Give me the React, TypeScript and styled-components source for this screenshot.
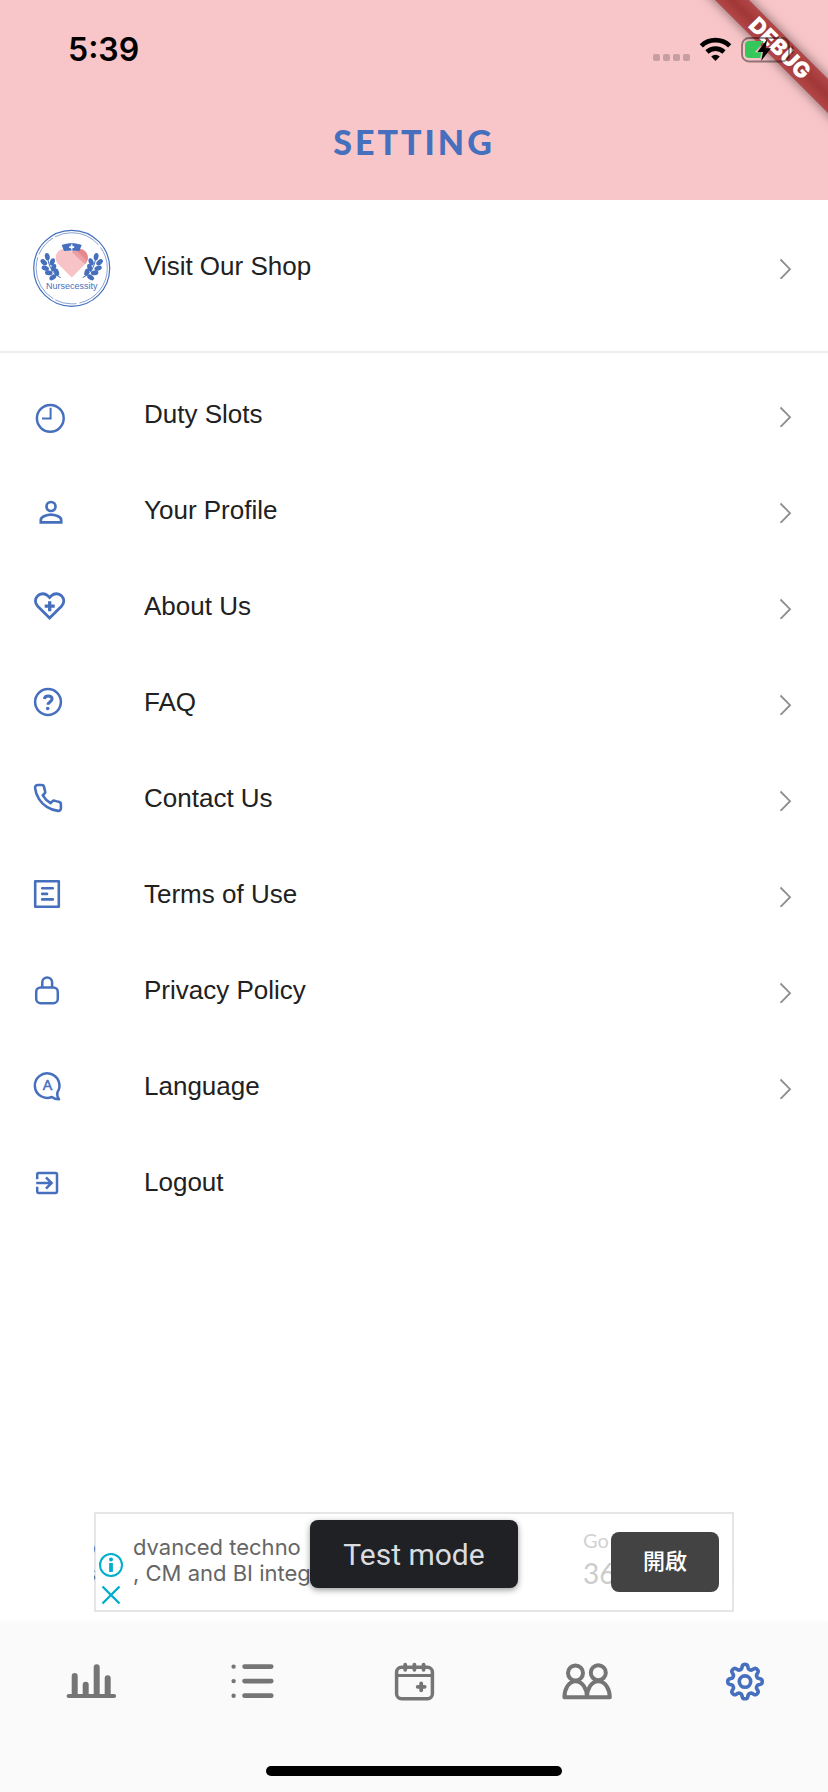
import React from "react";
import styled, { createGlobalStyle } from "styled-components";

const BLUE = "#466fbd";
const PINK = "#f8c6c9";
const GREY = "#757575";

const GlobalStyle = createGlobalStyle`
  *, *::before, *::after { box-sizing: border-box; }
  body {
    margin: 0;
    background: #ffffff;
    font-family: "Liberation Sans", Arial, sans-serif;
  }
`;

const Page = styled.div`
  position: relative;
  display: flex;
  flex-direction: column;
  min-height: 100vh;
  overflow: hidden;
`;

const Header = styled.header`
  background: ${PINK};
  padding-bottom: 36px;
`;

const StatusBar = styled.div`
  display: flex;
  justify-content: space-between;
  align-items: center;
  height: 100px;
  padding: 0 28px 0 68px;
`;

const Clock = styled.time`
  font: 600 32px/40px Inter, sans-serif;
  color: #000;
`;

const StatusIcons = styled.svg`
  position: relative;
  z-index: 2;
  display: block;
  width: 150px;
  height: 32px;
`;

const Title = styled.h1`
  margin: 0;
  padding-top: 20px;
  text-align: center;
  font: 900 34px/44px Lato, sans-serif;
  letter-spacing: 3px;
  color: ${BLUE};
`;

const RibbonCorner = styled.div`
  position: absolute;
  top: 0;
  right: 0;
  z-index: 1;
  width: 160px;
  height: 160px;
  overflow: hidden;
  pointer-events: none;
`;

const Ribbon = styled.div`
  position: absolute;
  top: 36px;
  left: 12px;
  width: 200px;
  height: 24px;
  transform: rotate(45deg);
  background: linear-gradient(#b24648, #a23737 50%, #b24648);
  box-shadow: 0 0 12px rgba(0, 0, 0, 0.5);
  color: #fff;
  text-align: center;
  font: 900 22px/24px Inter, sans-serif;
`;

const ShopSection = styled.section`
  padding-bottom: 19px;
  border-bottom: 2px solid #eeeeee;
`;

const List = styled.ul`
  flex: 1;
  margin: 0;
  padding: 13px 0 0;
  list-style: none;
`;

const Row = styled.a<{ $tall?: boolean }>`
  display: grid;
  grid-template-columns: 112px 1fr 14px;
  align-items: center;
  height: ${(p) => (p.$tall ? 132 : 96)}px;
  padding: 0 36px 0 32px;
  color: #212121;
  font-size: 26px;
  line-height: 32px;
  text-decoration: none;
`;

const RowIcon = styled.svg`
  display: block;
  width: 36px;
  height: 36px;
  overflow: visible;
  fill: none;
  stroke: ${BLUE};
  stroke-width: 2.5;
`;

const LogoSvg = styled.svg`
  display: block;
  width: 80px;
  height: 84px;
`;

const ChevronSvg = styled.svg`
  display: block;
  width: 14px;
  height: 26px;
  fill: none;
  stroke: #8e8e8e;
  stroke-width: 1.8;
`;

const Ad = styled.aside`
  position: relative;
  display: flex;
  align-items: center;
  width: 100%;
  max-width: 640px;
  height: 100px;
  margin: 0 auto 10px;
  background: #fff;
  box-shadow: inset 0 0 0 2px #e4e5e7;
  font-family: Inter, sans-serif;
`;

const Sliver = styled.div<{ $end?: boolean }>`
  display: flex;
  flex-direction: column;
  align-items: ${(p) => (p.$end ? "flex-start" : "flex-end")};
  flex: none;
  width: 2px;
  padding-bottom: 4px;
  overflow: hidden;
  color: ${(p) => (p.$end ? "#cccccc" : "#666666")};
  font-size: 22px;
  line-height: 26px;
`;

const AdChoices = styled.div`
  display: flex;
  flex-direction: column;
  align-items: center;
  align-self: flex-end;
  gap: 4px;
  flex: none;
  width: 30px;
  margin-right: 7px;
  padding-bottom: 4px;
`;

const AdControl = styled.button`
  display: block;
  width: 26px;
  height: 26px;
  padding: 0;
  border: 0;
  background: none;
  fill: none;
  stroke: #00aecd;
  stroke-width: 2;

  svg { display: block; }
`;

const AdCopy = styled.p`
  flex: 1;
  margin: 0;
  padding-bottom: 4px;
  overflow: hidden;
  white-space: nowrap;
  color: #666666;
  font-size: 22px;
  line-height: 26px;
`;

const AdBrand = styled.div`
  flex: none;
  width: 28px;
  padding-bottom: 4px;
  overflow: hidden;
  color: #d2d2d2;
  font: 400 20px/26px Lato, sans-serif;

  strong {
    display: block;
    font-size: 28px;
    font-weight: 400;
    line-height: 40px;
    color: #cccccc;
  }
`;

const OpenButton = styled.button`
  flex: none;
  width: 108px;
  height: 60px;
  margin-right: 13px;
  padding: 0 0 6px;
  border: 0;
  border-radius: 8px;
  background: #434343;
  color: #fff;
  font: 500 22px/32px "Noto Sans CJK TC", sans-serif;
`;

const TestMode = styled.div`
  position: absolute;
  top: 8px;
  left: 50%;
  width: 208px;
  height: 68px;
  transform: translateX(-50%);
  border-radius: 8px;
  background: #202124;
  box-shadow: 0 2px 6px rgba(0, 0, 0, 0.4);
  color: #dadce0;
  text-align: center;
  font: 400 30px/70px Roboto, sans-serif;
`;

const BottomNav = styled.nav`
  display: flex;
  flex-direction: column;
  align-items: center;
  padding: 38px 0 16px;
  background: #fafafa;
  box-shadow: 0 -1px 4px rgba(0, 0, 0, 0.03);
`;

const Tabs = styled.div`
  display: grid;
  grid-template-columns: repeat(5, 1fr);
  justify-items: center;
  width: 100%;
  margin-bottom: 62px;
`;

const Tab = styled.a<{ $active?: boolean }>`
  display: block;
  color: ${(p) => (p.$active ? BLUE : GREY)};

  svg {
    display: block;
    width: 72px;
    height: 44px;
    fill: none;
    stroke: currentColor;
    stroke-linecap: round;
    stroke-linejoin: round;
  }
`;

const HomeIndicator = styled.div`
  width: 296px;
  height: 10px;
  border-radius: 5px;
  background: #000;
`;

const Chevron = () => (
  <ChevronSvg viewBox="0 0 14 26" aria-hidden="true">
    <path d="M2.5 6.5l9.5 9.7-9.5 9.7" />
  </ChevronSvg>
);

const leaves = [
  [15.3, 30.7, 80],
  [11.8, 36.3, 40],
  [20.3, 35.9, -70],
  [13.3, 42.2, 20],
  [21.6, 41.6, -70],
  [16.8, 46.8, 5],
  [24.6, 46.3, 75],
  [20.8, 51.4, -35],
];

const Branch = ({ mirrored }: { mirrored?: boolean }) => (
  <g transform={mirrored ? "translate(79.4 0) scale(-1 1)" : undefined}>
    <path d="M28.7 51.6C22 48.5 16.5 42 15.5 30" fill="none" stroke={BLUE} strokeWidth="1" />
    {leaves.map(([x, y, a]) => (
      <ellipse key={`${x}-${y}`} cx={x} cy={y} rx="3.8" ry="2.4" fill={BLUE} transform={`rotate(${a} ${x} ${y})`} />
    ))}
  </g>
);

const Logo = () => (
  <LogoSvg viewBox="0 0 80 84" role="img" aria-label="Nursecessity">
    <g transform="translate(0 2)">
      <circle cx="39.7" cy="42.3" r="38" fill="#fff" stroke={BLUE} strokeWidth="1.2" />
      <circle cx="39.7" cy="42.3" r="35.6" fill="none" stroke={BLUE} strokeWidth="0.8" strokeDasharray="48 3 22 2" opacity="0.8" />
      <path
        d="M39.7 51.6L26.4 38.3c-3.6-3.8-3.6-9.4-.2-12.9 3.7-3.6 9.8-3.5 13.5.6 3.7-4.1 9.8-4.2 13.5-.6 3.4 3.5 3.4 9.1-.2 12.9z"
        fill="#f7c3c7"
      />
      <path d="M39.7 26c3.7-4.1 9.8-4.2 13.5-.6 3.4 3.5 3.4 9.1-.2 12.9z" fill="#eda0a4" />
      <path d="M44 24c3-1.9 6.7-1.2 9.2 1.4 2.6 2.6 3.2 6.5 1.8 9.6z" fill="#e5878c" />
      <path d="M29.7 19c6-2.4 14-2.4 20 0l-2.3 6c-5-.8-10.4-.8-15.4 0z" fill={BLUE} />
      <path d="M39.7 18.6v5M37.2 21.1h5" stroke="#fff" strokeWidth="1.6" />
      <Branch />
      <Branch mirrored />
      <text x="39.7" y="63" textAnchor="middle" fill={BLUE} fontFamily='"Liberation Sans", sans-serif' fontSize="9">
        Nursecessity
      </text>
    </g>
  </LogoSvg>
);

const items: { label: string; icon: React.ReactNode; noChevron?: boolean }[] = [
  {
    label: "Duty Slots",
    icon: (
      <>
        <circle cx="18.3" cy="22.3" r="13.4" />
        <path d="M18.6 11.7v10.800H10" strokeWidth="2" />
      </>
    ),
  },
  {
    label: "Your Profile",
    icon: (
      <>
        <circle cx="19" cy="14.5" r="4.5" strokeWidth="2.7" />
        <path d="M8.8 30.3v-2.4c0-3.2 6.5-5.2 10.2-5.2s10.2 2 10.2 5.2v2.4z" strokeWidth="2.7" />
      </>
    ),
  },
  {
    label: "About Us",
    icon: (
      <>
        <path
          d="M17.6 30L5.700 18.300c-3-3-3-7.600-.2-10.400s7.400-2.900 10.300-.1l1.800 1.800 1.800-1.800c2.900-2.800 7.500-2.700 10.300.1s2.800 7.400-.2 10.400z"
          strokeWidth="2.8"
        />
        <path d="M17.7 13.200v10M12.700 18.200h10" strokeWidth="3.300" />
      </>
    ),
  },
  {
    label: "FAQ",
    icon: (
      <>
        <circle cx="16" cy="18" r="12.900" />
        <path d="M12.400 15c.2-2 1.800-2.900 3.800-2.900 2.300 0 3.900 1.100 3.900 3 0 2.600-4 2.700-4 5.600" strokeWidth="3" />
        <circle cx="15.700" cy="24.500" r="1.800" fill={BLUE} stroke="none" />
      </>
    ),
  },
  {
    label: "Contact Us",
    icon: (
      <path
        transform="translate(.3 2.400) scale(1.300)"
        strokeWidth="2"
        d="M22 16.920v3a2 2 0 0 1-2.180 2 19.790 19.790 0 0 1-8.630-3.070 19.500 19.500 0 0 1-6-6 19.790 19.790 0 0 1-3.070-8.670A2 2 0 0 1 4.110 2h3a2 2 0 0 1 2 1.720 12.840 12.840 0 0 0 .7 2.810 2 2 0 0 1-.45 2.110L8.090 9.910a16 16 0 0 0 6 6l1.270-1.270a2 2 0 0 1 2.110-.45 12.840 12.840 0 0 0 2.810.7A2 2 0 0 1 22 16.920z"
      />
    ),
  },
  {
    label: "Terms of Use",
    icon: (
      <>
        <rect x="3.200" y="5.200" width="23.600" height="25.600" strokeWidth="2.600" strokeLinejoin="round" />
        <path d="M10.200 12.300h10.600M10.200 17.900h4.800M10.200 23.400h10.600" strokeWidth="2.600" strokeLinecap="round" />
      </>
    ),
  },
  {
    label: "Privacy Policy",
    icon: (
      <>
        <rect x="4.200" y="15.400" width="21.600" height="15.900" rx="4.500" />
        <path d="M10.300 15.400V10.300a4.900 4.900 0 0 1 9.800 0v5.100" />
      </>
    ),
  },
  {
    label: "Language",
    icon: (
      <>
        <path d="M19.800 29A12.300 12.300 0 1 1 25.400 24.400C24.900 27 25.600 29.400 27 31.300C24.400 31.400 22 30.600 19.800 29Z" strokeLinejoin="round" />
        <text x="15.400" y="22" textAnchor="middle" fill={BLUE} stroke={BLUE} strokeWidth="0.500" fontFamily="Lato, sans-serif" fontSize="14">
          A
        </text>
      </>
    ),
  },
  {
    label: "Logout",
    noChevron: true,
    icon: (
      <>
        <path d="M5.200 15.300V10.400a1.400 1.400 0 0 1 1.400-1.400H23.600a1.400 1.400 0 0 1 1.400 1.400V27.600a1.400 1.400 0 0 1-1.400 1.400H6.600a1.400 1.400 0 0 1-1.400-1.400V22.700" />
        <path d="M4.200 19h15M14 13.300l5.600 5.700-5.600 5.700" />
      </>
    ),
  },
];

/* Outline of a cog with eight rounded teeth, centred on (cx, cy). */
const cogPath = (cx: number, cy: number) => {
  const points: string[] = [];
  for (let i = 0; i < 160; i++) {
    const t = (i / 160) * Math.PI * 2;
    const r = 15 + (2.2 * Math.tanh(1.8 * Math.cos(8 * t))) / Math.tanh(1.8);
    points.push(`${(cx + r * Math.sin(t)).toFixed(2)} ${(cy - r * Math.cos(t)).toFixed(2)}`);
  }
  return `M${points.join("L")}Z`;
};

const tabs = [
  {
    label: "Statistics",
    icon: (
      <>
        <path d="M21.700 36h45.300" strokeWidth="4.200" />
        <path d="M27.700 35V16M38.700 35V24.700M49.700 35V7.200M60.700 35V18.300" strokeWidth="6" />
      </>
    ),
  },
  {
    label: "List",
    icon: (
      <>
        <path d="M32.600 6.600h26.600M32.600 21.100h26.600M32.600 35.700h26.600" strokeWidth="4.800" />
        <path d="M21.600 6.600h.01M21.600 21.100h.01M21.600 35.700h.01" strokeWidth="4.400" />
      </>
    ),
  },
  {
    label: "Calendar",
    icon: (
      <>
        <rect x="18.600" y="7.200" width="35.800" height="31.600" rx="5" strokeWidth="3.500" />
        <path d="M19 15.500h35" strokeWidth="3" />
        <path d="M27.200 4.600v5.200M36.400 4.600v5.200M45.600 4.600v5.200" strokeWidth="3.800" />
        <path d="M43.200 23.300v7M39.700 26.800h7" strokeWidth="3.800" />
      </>
    ),
  },
  {
    label: "Friends",
    icon: (
      <>
        <circle cx="31.500" cy="13" r="7.500" strokeWidth="4" />
        <circle cx="54.300" cy="12.700" r="7.500" strokeWidth="4" />
        <path d="M20.400 37.200c.2-8.500 4.300-16 11.200-16s11.200 7.500 11.400 16zM43 37.200c.2-8.500 4.300-16 11.300-16s11.300 7.500 11.500 16z" strokeWidth="4" />
      </>
    ),
  },
  {
    label: "Settings",
    active: true,
    icon: (
      <>
        <path d={cogPath(36, 21.6)} strokeWidth="3.600" />
        <circle cx="36" cy="21.600" r="5.700" strokeWidth="3.600" />
      </>
    ),
  },
];

export default function App() {
  return (
    <Page>
      <GlobalStyle />
      <Header>
        <StatusBar>
          <Clock>5:39</Clock>
          <StatusIcons viewBox="650 34 150 32" aria-hidden="true">
            <g fill="#c79ea1">
              {[653, 663, 673, 683].map((x) => (
                <rect key={x} x={x} y="54" width="7" height="7" rx="2" />
              ))}
            </g>
            <g fill="none" stroke="#000" strokeWidth="4.600">
              <path d="M701.300 45.800a20.600 20.600 0 0 1 28.400 0" />
              <path d="M707 52a12.300 12.300 0 0 1 17 0" />
            </g>
            <path d="M715.500 61l-4.300-4.400a6.200 6.200 0 0 1 8.600 0z" />
            <rect x="742" y="38" width="47" height="23.500" rx="7" fill="none" stroke="#000" strokeOpacity="0.420" strokeWidth="1.900" />
            <path d="M791.500 45.500c3 1 3 7.500 0 8.500z" fill="#000" fillOpacity="0.420" />
            <path d="M749 41h14.800l-9 11.300h6.500l-1 5.700H749a4 4 0 0 1-4-4v-9a4 4 0 0 1 4-4z" fill="#34c759" />
            <path d="M767.300 39.300l-9.800 12.600h5.500l-1.800 9 9.800-12.600h-5.500z" fill="#000" />
          </StatusIcons>
        </StatusBar>
        <Title>SETTING</Title>
      </Header>
      <RibbonCorner>
        <Ribbon>DEBUG</Ribbon>
      </RibbonCorner>

      <ShopSection>
        <Row href="#shop" $tall>
          <Logo />
          <span>Visit Our Shop</span>
          <Chevron />
        </Row>
      </ShopSection>

      <List>
        {items.map(({ label, icon, noChevron }) => (
          <li key={label}>
            <Row href="#">
              <RowIcon viewBox="0 0 36 36" aria-hidden="true">
                {icon}
              </RowIcon>
              <span>{label}</span>
              {!noChevron && <Chevron />}
            </Row>
          </li>
        ))}
      </List>

      <Ad>
        <Sliver aria-hidden="true">
          <span>o</span>
          <span>s</span>
        </Sliver>
        <AdChoices>
          <AdControl aria-label="Ad information">
            <svg viewBox="0 0 26 26" width="26" height="26">
              <circle cx="13" cy="13" r="11" />
              <circle cx="13" cy="7.600" r="2" fill="#00aecd" stroke="none" />
              <path d="M13 11v9" strokeWidth="3.800" />
            </svg>
          </AdControl>
          <AdControl aria-label="Close ad">
            <svg viewBox="0 0 26 26" width="26" height="26">
              <path d="M4.500 4.500l17 17M21.500 4.500l-17 17" strokeWidth="2.400" />
            </svg>
          </AdControl>
        </AdChoices>
        <AdCopy>
          dvanced techno
          <br />, CM and BI integ
        </AdCopy>
        <AdBrand>
          Go
          <strong>36</strong>
        </AdBrand>
        <OpenButton>開啟</OpenButton>
        <Sliver $end aria-hidden="true">
          <span>&nbsp;</span>
          <span>E</span>
        </Sliver>
        <TestMode>Test mode</TestMode>
      </Ad>

      <BottomNav>
        <Tabs>
          {tabs.map(({ label, icon, active }) => (
            <Tab key={label} href="#" aria-label={label} $active={active}>
              <svg viewBox="0 0 72 44" aria-hidden="true">
                {icon}
              </svg>
            </Tab>
          ))}
        </Tabs>
        <HomeIndicator />
      </BottomNav>
    </Page>
  );
}
